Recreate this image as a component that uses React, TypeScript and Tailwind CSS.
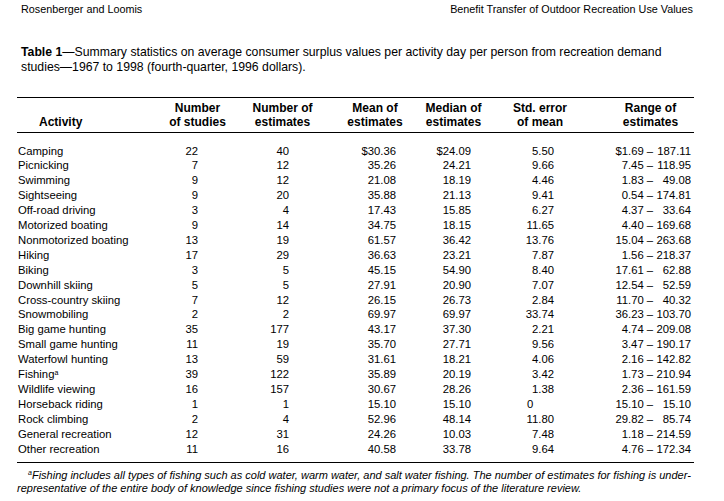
const rows: [string, string, string, string, string, string, string, string][] = [
  ["Camping", "22", "40", "$30.36", "$24.09", "5.50", "$1.69", "187.11"],
  ["Picnicking", "7", "12", "35.26", "24.21", "9.66", "7.45", "118.95"],
  ["Swimming", "9", "12", "21.08", "18.19", "4.46", "1.83", "49.08"],
  ["Sightseeing", "9", "20", "35.88", "21.13", "9.41", "0.54", "174.81"],
  ["Off-road driving", "3", "4", "17.43", "15.85", "6.27", "4.37", "33.64"],
  ["Motorized boating", "9", "14", "34.75", "18.15", "11.65", "4.40", "169.68"],
  ["Nonmotorized boating", "13", "19", "61.57", "36.42", "13.76", "15.04", "263.68"],
  ["Hiking", "17", "29", "36.63", "23.21", "7.87", "1.56", "218.37"],
  ["Biking", "3", "5", "45.15", "54.90", "8.40", "17.61", "62.88"],
  ["Downhill skiing", "5", "5", "27.91", "20.90", "7.07", "12.54", "52.59"],
  ["Cross-country skiing", "7", "12", "26.15", "26.73", "2.84", "11.70", "40.32"],
  ["Snowmobiling", "2", "2", "69.97", "69.97", "33.74", "36.23", "103.70"],
  ["Big game hunting", "35", "177", "43.17", "37.30", "2.21", "4.74", "209.08"],
  ["Small game hunting", "11", "19", "35.70", "27.71", "9.56", "3.47", "190.17"],
  ["Waterfowl hunting", "13", "59", "31.61", "18.21", "4.06", "2.16", "142.82"],
  ["Fishing", "39", "122", "35.89", "20.19", "3.42", "1.73", "210.94"],
  ["Wildlife viewing", "16", "157", "30.67", "28.26", "1.38", "2.36", "161.59"],
  ["Horseback riding", "1", "1", "15.10", "15.10", "0", "15.10", "15.10"],
  ["Rock climbing", "2", "4", "52.96", "48.14", "11.80", "29.82", "85.74"],
  ["General recreation", "12", "31", "24.26", "10.03", "7.48", "1.18", "214.59"],
  ["Other recreation", "11", "16", "40.58", "33.78", "9.64", "4.76", "172.34"],
];

const cols = "grid grid-cols-[143px_75px_95px_90px_67px_106px_101px]";

const App = () => {
  return (
    <div className="w-[724px] h-[501px] bg-white text-black font-['Liberation_Sans',Arial,sans-serif] pl-[17px] pr-[30px] pt-[3px]">
      {/* running heads */}
      <div className="flex justify-between text-[10.8px] leading-[12px] pl-[4px] pr-[1px]">
        <span>Rosenberger and Loomis</span>
        <span>Benefit Transfer of Outdoor Recreation Use Values</span>
      </div>

      {/* caption */}
      <p className="text-[12.25px] leading-[15px] pl-[4px] mt-[30px]">
        <b>Table 1</b>—Summary statistics on average consumer surplus values per activity day per person from recreation demand
        <br />
        studies—1967 to 1998 (fourth-quarter, 1996 dollars).
      </p>

      {/* table */}
      <div className="mt-[22px] border-t border-black text-[11.3px]">
        <div className={`${cols} border-b border-black font-bold text-[12px] leading-[14px] pt-[3px] pb-[3px]`}>
          <div className="flex items-end pl-[22px]">Activity</div>
          <div className="text-center">Number<br />of studies</div>
          <div className="text-center">Number of<br />estimates</div>
          <div className="text-center">Mean of<br />estimates</div>
          <div className="text-center">Median of<br />estimates</div>
          <div className="text-center">Std. error<br />of mean</div>
          <div className="text-center pl-[14px]">Range of<br />estimates</div>
        </div>

        <div className="pt-[10.5px] pb-[5px] border-b border-black">
          {rows.map((r) => (
            <div key={r[0]} className={`${cols} leading-[14.9px]`}>
              <div className="pl-[1px]">
                {r[0]}
                {r[0] === "Fishing" && <sup className="text-[7px]">a</sup>}
              </div>
              <div className="text-right pr-[37px]">{r[1]}</div>
              <div className="text-right pr-[41px]">{r[2]}</div>
              <div className="text-right pr-[24px]">{r[3]}</div>
              <div className="text-right pr-[16px]">{r[4]}</div>
              <div className={r[5] === "0" ? "pl-[40px]" : "text-right pr-[39px]"}>{r[5]}</div>
              <div className="flex justify-end pr-[3px]">
                <span className="text-right">{r[6]}</span>
                <span className="px-[3px]">–</span>
                <span className="w-[35px] text-right">{r[7]}</span>
              </div>
            </div>
          ))}
        </div>

        {/* footnote */}
        <p className="italic text-[11px] leading-[13px] mt-[6px] indent-[11px] whitespace-nowrap">
          <sup className="text-[7px]">a</sup>Fishing includes all types of fishing such as cold water, warm water, and salt water fishing. The number of estimates for fishing is under-
          <br />
          representative of the entire body of knowledge since fishing studies were not a primary focus of the literature review.
        </p>
      </div>
    </div>
  );
};

export default App;
